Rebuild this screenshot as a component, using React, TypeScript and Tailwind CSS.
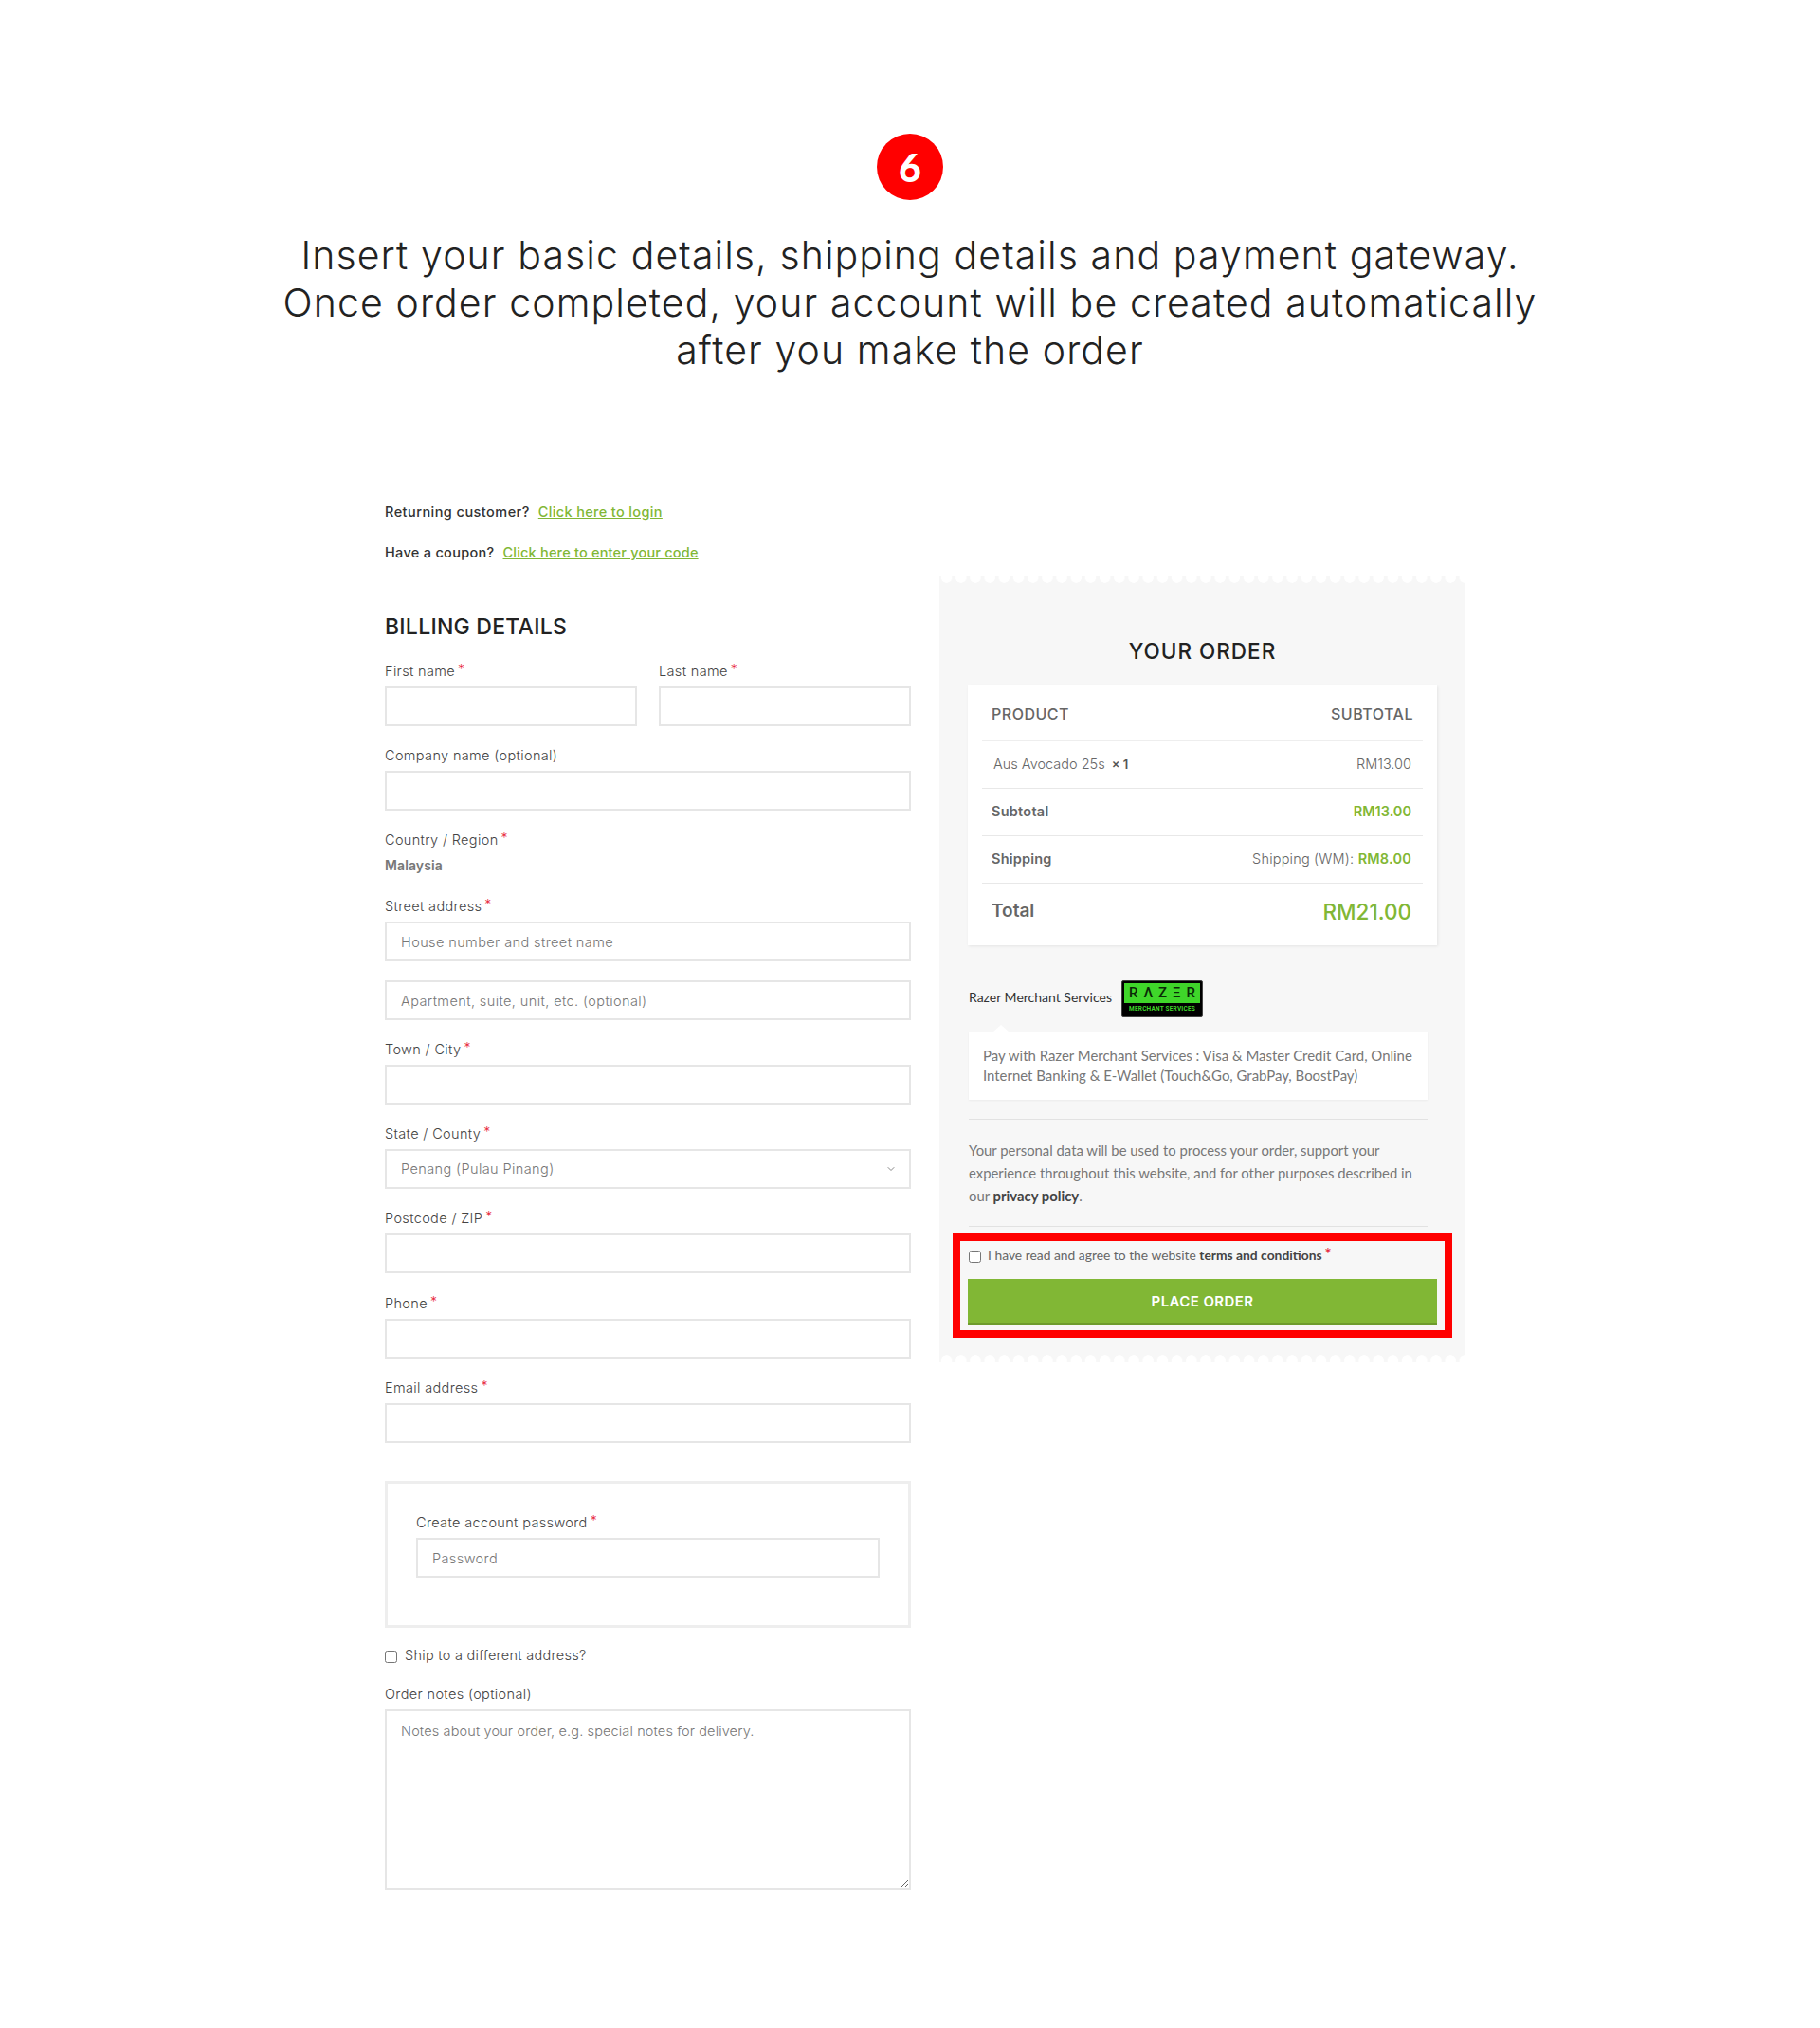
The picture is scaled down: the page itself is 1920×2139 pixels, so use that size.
import { ChevronDown } from 'lucide-react'

const INPUT =
  "block w-full h-[42px] px-[15px] bg-white border-2 border-[#e6e6e6] text-[14.5px] tracking-[0.4px] font-light text-[#555] outline-none placeholder:text-[#777]"

const LABEL = 'block h-6 mb-1 text-[14.5px] tracking-[0.35px] leading-6 font-light text-[#444]'

function Star() {
  return <span className="relative top-[-2px] ml-[3px] font-['Inter',sans-serif] text-[14px] leading-none text-[#e8283c]">*</span>
}

// Label above a single control, one row of the billing form
function Field({ label, required, last, children }: { label: string; required?: boolean; last?: boolean; children: React.ReactNode }) {
  return (
    <div className={last ? 'mb-[20px]' : 'mb-[19px]'}>
      <label className={LABEL}>
        {label}
        {required && <Star />}
      </label>
      {children}
    </div>
  )
}

function OrderRow({ left, right, className = '' }: { left: React.ReactNode; right: React.ReactNode; className?: string }) {
  return <div className={`flex items-center justify-between mx-[15px] pl-[10px] pr-[12px] ${className}`}>{left}{right}</div>
}

function RazerLogo() {
  return (
    <div className="w-[86px] h-[39px] ml-[10px] bg-black rounded-[2px] border border-[#444] p-[2px] font-['Roboto',sans-serif]">
      <div className="flex h-[21px] items-center justify-between px-[5px] pt-[1px] bg-[#3fd62a] text-[15px] font-medium leading-none text-[#0a2a06]">
        <span>R</span>
        <span>Λ</span>
        <span>Z</span>
        <span>Ξ</span>
        <span>R</span>
      </div>
      <div className="mt-[2px] text-center text-[6.5px] font-bold leading-[8px] tracking-[0.2px] whitespace-nowrap text-[#3fd62a]">
        MERCHANT SERVICES
      </div>
    </div>
  )
}

export default function App() {
  return (
    <div className="relative min-h-[2139px] bg-white font-['Inter',sans-serif] text-[#444]">
      <div className="pt-[141px] flex flex-col items-center">
        <div className="flex items-center justify-center w-[70px] h-[70px] rounded-full bg-[#ff0000] font-['Lato',sans-serif] text-[41px] font-black leading-none text-white">
          6
        </div>
        <h2 className="mt-[33px] text-center text-[41px] leading-[50px] font-light tracking-[1.1px] text-[#222]">
          Insert your basic details, shipping details and payment gateway.
          <br />
          Once order completed, your account will be created automatically
          <br />
          after you make the order
        </h2>
      </div>

      <div className="pl-[406px] mt-[134px]">
        <p className="mb-[19px] text-[14.5px] tracking-[0.45px] leading-6 font-medium text-[#333]">
          Returning customer?
          <a className="ml-[9px] tracking-[0.35px] text-[#81b735] underline">Click here to login</a>
        </p>
        <p className="text-[14.5px] tracking-[0.3px] leading-6 font-medium text-[#333]">
          Have a coupon?
          <a className="ml-[9px] tracking-[0.2px] text-[#81b735] underline">Click here to enter your code</a>
        </p>

        <div className="mt-3 grid grid-cols-[555px_555px] gap-[30px] items-start">
          {/* Billing form */}
          <div>
            <h3 className="mt-[41px] mb-[22px] text-[23px] tracking-[0.25px] leading-[26px] font-medium text-[#222]">BILLING DETAILS</h3>

            <div className="grid grid-cols-2 gap-[23px]">
              <Field label="First name" required>
                <input className={INPUT} />
              </Field>
              <Field label="Last name" required>
                <input className={INPUT} />
              </Field>
            </div>
            <Field label="Company name (optional)">
              <input className={INPUT} />
            </Field>

            <div className="mb-[18px]">
              <label className={LABEL}>
                Country / Region
                <Star />
              </label>
              <div className="h-6 text-[14px] tracking-[0.1px] leading-[22px] font-semibold text-[#777]">Malaysia</div>
            </div>

            <Field label="Street address" required>
              <input className={`${INPUT} mb-[20px]`} placeholder="House number and street name" />
              <input className={`${INPUT} tracking-[0.3px]`} placeholder="Apartment, suite, unit, etc. (optional)" />
            </Field>
            <Field label="Town / City" required>
              <input className={INPUT} />
            </Field>
            <Field label="State / County" required>
              <div className="relative">
                <select className={`${INPUT} appearance-none text-[#777]`} defaultValue="Penang (Pulau Pinang)">
                  <option>Penang (Pulau Pinang)</option>
                </select>
                <ChevronDown size={12} className="absolute right-[15px] top-[15px] text-[#888]" />
              </div>
            </Field>
            <Field label="Postcode / ZIP" required last>
              <input className={INPUT} />
            </Field>
            <Field label="Phone" required>
              <input className={INPUT} />
            </Field>
            <Field label="Email address" required>
              <input className={INPUT} />
            </Field>

            <div className="mt-[40px] h-[155px] border-[3px] border-[#eeeeee] pt-[29px] px-[30px]">
              <label className={LABEL}>
                Create account password
                <Star />
              </label>
              <input className={INPUT} placeholder="Password" />
            </div>

            <label className="mt-[17px] flex items-center h-6 text-[14.5px] tracking-[0.27px] font-light">
              <input type="checkbox" className="w-[13px] h-[13px] mr-[8px] mt-[2px]" />
              Ship to a different address?
            </label>

            <label className={`${LABEL} mt-[17px]`}>Order notes (optional)</label>
            <textarea
              className="block w-full h-[190px] px-[15px] py-[10px] bg-white border-2 border-[#e6e6e6] text-[14.5px] tracking-[0.13px] font-light outline-none placeholder:text-[#777]"
              placeholder="Notes about your order, e.g. special notes for delivery."
            />
          </div>

          {/* Order panel */}
          <div className="relative h-[830px] bg-[#f7f7f7] px-[30px] pt-[67px]">
            <div className="absolute inset-x-0 top-0 h-2 bg-[radial-gradient(circle_at_50%_2px,#ffffff_5.5px,transparent_6px)] bg-[length:15.2px_8px]" />
            <div className="absolute inset-x-0 bottom-0 h-2 bg-[radial-gradient(circle_at_50%_6px,#ffffff_5.5px,transparent_6px)] bg-[length:15.2px_8px]" />

            <h3 className="h-[26px] text-center text-[22.5px] tracking-[1px] leading-[26px] font-medium text-[#222]">YOUR ORDER</h3>

            <div className="mt-[23px] h-[274px] bg-white shadow-[1px_1px_3px_rgba(0,0,0,0.08)] text-[#666]">
              <div className="flex items-center justify-between mx-[15px] pl-[10px] pr-[10px] pt-[2px] h-[59px] border-b-2 border-[#eeeeee] text-[16px] tracking-[0.5px] font-medium">
                <span>PRODUCT</span>
                <span>SUBTOTAL</span>
              </div>
              <OrderRow
                className="h-[50px] pb-[2px] border-b border-[#e8e8e8] text-[14.5px] font-light"
                left={
                  <span className="ml-[2px]">
                    Aus Avocado 25s <strong className="ml-[3px] text-[13px] font-semibold text-[#555]">× 1</strong>
                  </span>
                }
                right={<span>RM13.00</span>}
              />
              <OrderRow
                className="h-[50px] pb-[2px] border-b border-[#e8e8e8] text-[14.5px] font-semibold"
                left={<span className="tracking-[0.25px]">Subtotal</span>}
                right={<span className="text-[#81b735]">RM13.00</span>}
              />
              <OrderRow
                className="h-[50px] pb-[2px] border-b border-[#e8e8e8] text-[14.5px] tracking-[0.2px] font-semibold"
                left={<span>Shipping</span>}
                right={
                  <span className="font-light">
                    Shipping (WM): <span className="font-semibold text-[#81b735]">RM8.00</span>
                  </span>
                }
              />
              <OrderRow
                className="h-[58px] pt-[1px] text-[19px] font-semibold"
                left={<span>Total</span>}
                right={<span className="text-[22.5px] font-medium text-[#81b735]">RM21.00</span>}
              />
            </div>

            <div className="ml-[1px] mr-[10px] font-['Lato',sans-serif]">
              <div className="mt-[36px] flex items-center h-[40px] text-[14px] text-[#333]">
                <span className="-mt-[3px]">Razer Merchant Services</span>
                <RazerLogo />
              </div>
              <div className="relative mt-[15px] h-[72px] bg-white px-[15px] py-[15px] shadow-[0_1px_2px_rgba(0,0,0,0.05)] text-[14.95px] leading-[21px] text-[#777]">
                <span className="absolute left-[26px] -top-[7px] w-0 h-0 border-x-[8px] border-b-[7px] border-x-transparent border-b-white" />
                Pay with Razer Merchant Services : Visa &amp; Master Credit Card, Online Internet Banking &amp; E-Wallet
                (Touch&amp;Go, GrabPay, BoostPay)
              </div>
              <div className="mt-[20px] border-t border-[#e2e2e2] pt-[20px] pb-[20px] text-[14.85px] leading-6 text-[#777]">
                Your personal data will be used to process your order, support your experience throughout this website,
                and for other purposes described in our <strong className="font-bold text-[#444]">privacy policy</strong>.
              </div>
              <div className="border-t border-[#e2e2e2] pt-[26px] flex items-center h-[33px] text-[13.85px] text-[#666]">
                <input type="checkbox" className="w-[13px] h-[13px] mr-[7px] mt-[4px]" />
                <span className="mt-[2px]">
                  I have read and agree to the website <strong className="font-bold text-[#444]">terms and conditions</strong>
                  <Star />
                </span>
              </div>
            </div>

            <button className="mt-[23px] block w-full h-[48px] pt-[2px] bg-[#81b735] border-b-2 border-[#6d9b2d] text-[15px] tracking-[0.4px] font-semibold text-white">
              PLACE ORDER
            </button>

            {/* annotation from the guide: red frame round the last step */}
            <div className="absolute left-[14px] top-[694px] w-[527px] h-[110px] border-[8px] border-[#ff0000] pointer-events-none" />
          </div>
        </div>
      </div>
    </div>
  )
}
